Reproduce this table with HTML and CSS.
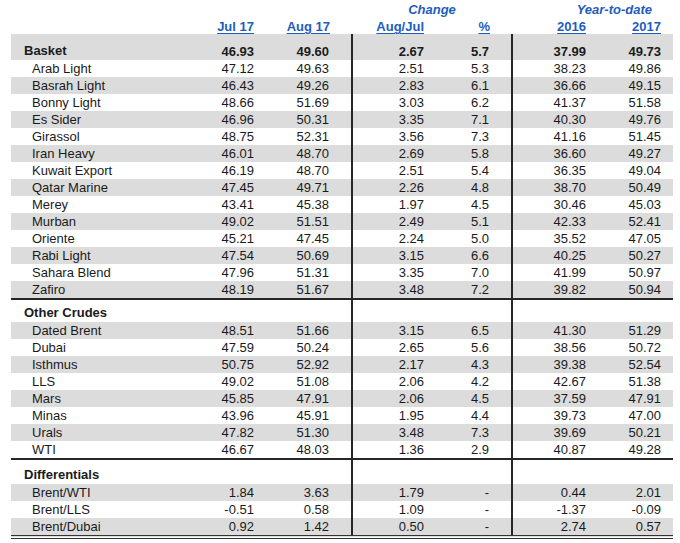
FILE: index.html
```html
<!DOCTYPE html>
<html>
<head>
<meta charset="utf-8">
<link rel="stylesheet" href="styles.css">
</head>
<body>
<table class="prices">
  <colgroup>
    <col class="c-name"><col class="c-jul"><col class="c-aug"><col class="c-chg"><col class="c-pct"><col class="c-y16"><col class="c-y17">
  </colgroup>
  <thead>
    <tr class="h1">
      <th></th><th></th><th></th>
      <th colspan="2" class="grp grp-chg">Change</th>
      <th colspan="2" class="grp grp-ytd">Year-to-date</th>
    </tr>
    <tr class="h2">
      <th></th>
      <th class="num"><span>Jul 17</span></th>
      <th class="num pad-a"><span>Aug 17</span></th>
      <th class="num"><span>Aug/Jul</span></th>
      <th class="num pad-a"><span>%</span></th>
      <th class="num"><span>2016</span></th>
      <th class="num pad-b"><span>2017</span></th>
    </tr>
  </thead>
  <tbody>
    <tr class="sec basket g bold"><td class="secname">Basket</td><td>46.93</td><td>49.60</td><td>2.67</td><td>5.7</td><td>37.99</td><td>49.73</td></tr>
    <tr><td>Arab Light</td><td>47.12</td><td>49.63</td><td>2.51</td><td>5.3</td><td>38.23</td><td>49.86</td></tr>
    <tr class="g"><td>Basrah Light</td><td>46.43</td><td>49.26</td><td>2.83</td><td>6.1</td><td>36.66</td><td>49.15</td></tr>
    <tr><td>Bonny Light</td><td>48.66</td><td>51.69</td><td>3.03</td><td>6.2</td><td>41.37</td><td>51.58</td></tr>
    <tr class="g"><td>Es Sider</td><td>46.96</td><td>50.31</td><td>3.35</td><td>7.1</td><td>40.30</td><td>49.76</td></tr>
    <tr><td>Girassol</td><td>48.75</td><td>52.31</td><td>3.56</td><td>7.3</td><td>41.16</td><td>51.45</td></tr>
    <tr class="g"><td>Iran Heavy</td><td>46.01</td><td>48.70</td><td>2.69</td><td>5.8</td><td>36.60</td><td>49.27</td></tr>
    <tr><td>Kuwait Export</td><td>46.19</td><td>48.70</td><td>2.51</td><td>5.4</td><td>36.35</td><td>49.04</td></tr>
    <tr class="g"><td>Qatar Marine</td><td>47.45</td><td>49.71</td><td>2.26</td><td>4.8</td><td>38.70</td><td>50.49</td></tr>
    <tr><td>Merey</td><td>43.41</td><td>45.38</td><td>1.97</td><td>4.5</td><td>30.46</td><td>45.03</td></tr>
    <tr class="g"><td>Murban</td><td>49.02</td><td>51.51</td><td>2.49</td><td>5.1</td><td>42.33</td><td>52.41</td></tr>
    <tr><td>Oriente</td><td>45.21</td><td>47.45</td><td>2.24</td><td>5.0</td><td>35.52</td><td>47.05</td></tr>
    <tr class="g"><td>Rabi Light</td><td>47.54</td><td>50.69</td><td>3.15</td><td>6.6</td><td>40.25</td><td>50.27</td></tr>
    <tr><td>Sahara Blend</td><td>47.96</td><td>51.31</td><td>3.35</td><td>7.0</td><td>41.99</td><td>50.97</td></tr>
    <tr class="g end"><td>Zafiro</td><td>48.19</td><td>51.67</td><td>3.48</td><td>7.2</td><td>39.82</td><td>50.94</td></tr>

    <tr class="sec other bold"><td class="secname">Other Crudes</td><td></td><td></td><td></td><td></td><td></td><td></td></tr>
    <tr class="g"><td>Dated Brent</td><td>48.51</td><td>51.66</td><td>3.15</td><td>6.5</td><td>41.30</td><td>51.29</td></tr>
    <tr><td>Dubai</td><td>47.59</td><td>50.24</td><td>2.65</td><td>5.6</td><td>38.56</td><td>50.72</td></tr>
    <tr class="g"><td>Isthmus</td><td>50.75</td><td>52.92</td><td>2.17</td><td>4.3</td><td>39.38</td><td>52.54</td></tr>
    <tr><td>LLS</td><td>49.02</td><td>51.08</td><td>2.06</td><td>4.2</td><td>42.67</td><td>51.38</td></tr>
    <tr class="g"><td>Mars</td><td>45.85</td><td>47.91</td><td>2.06</td><td>4.5</td><td>37.59</td><td>47.91</td></tr>
    <tr><td>Minas</td><td>43.96</td><td>45.91</td><td>1.95</td><td>4.4</td><td>39.73</td><td>47.00</td></tr>
    <tr class="g"><td>Urals</td><td>47.82</td><td>51.30</td><td>3.48</td><td>7.3</td><td>39.69</td><td>50.21</td></tr>
    <tr class="end"><td>WTI</td><td>46.67</td><td>48.03</td><td>1.36</td><td>2.9</td><td>40.87</td><td>49.28</td></tr>

    <tr class="sec diff bold"><td class="secname">Differentials</td><td></td><td></td><td></td><td></td><td></td><td></td></tr>
    <tr class="g"><td>Brent/WTI</td><td>1.84</td><td>3.63</td><td>1.79</td><td>-</td><td>0.44</td><td>2.01</td></tr>
    <tr><td>Brent/LLS</td><td>-0.51</td><td>0.58</td><td>1.09</td><td>-</td><td>-1.37</td><td>-0.09</td></tr>
    <tr class="g last"><td>Brent/Dubai</td><td>0.92</td><td>1.42</td><td>0.50</td><td>-</td><td>2.74</td><td>0.57</td></tr>
  </tbody>
</table>
</body>
</html>
```
FILE: styles.css
```css
html, body {
  margin: 0;
  padding: 0;
  background: #ffffff;
}

body {
  font-family: "Liberation Sans", Arial, sans-serif;
  font-size: 13px;
  color: #1a1a1a;
}

.prices {
  margin-left: 11px;
  width: 662px;
  border-collapse: collapse;
  table-layout: fixed;
}

.c-name { width: 174px; }
.c-jul  { width: 69px; }
.c-aug  { width: 98px; }
.c-chg  { width: 72px; }
.c-pct  { width: 88px; }
.c-y16  { width: 74px; }
.c-y17  { width: 87px; }

.prices th,
.prices td {
  padding: 0;
  line-height: 17px;
  white-space: nowrap;
}

.prices thead th {
  font-weight: bold;
  color: #1f5cbf;
}

.prices .h1 th { height: 19px; vertical-align: middle; }
.prices .h2 th { height: 15px; vertical-align: top; line-height: 15px; }

.prices th.grp { font-style: italic; }
.prices th.grp-chg { text-align: center; }
.prices th.grp-ytd { text-align: right; padding-right: 21px; }

.prices th.num { text-align: right; }
.num span { text-decoration: underline; text-underline-offset: 2px; }

.prices th.pad-a { padding-right: 22px; }
.prices th.pad-b { padding-right: 12px; }

.prices tbody td {
  height: 17px;
  text-align: right;
  vertical-align: middle;
}

.prices tbody td:first-child {
  text-align: left;
  padding-left: 21px;
}

.prices tbody td:nth-child(3),
.prices tbody td:nth-child(5) { padding-right: 22px; }
.prices tbody td:nth-child(7) { padding-right: 12px; }

.prices tbody td:nth-child(4),
.prices tbody td:nth-child(6) { border-left: 2px solid #262626; }

.prices tbody tr.g td { background: #dcdcdc; }

.prices tbody tr.sec td { vertical-align: bottom; }
.prices tbody tr.basket td { height: 25px; }
.prices tbody tr.other td { height: 21px; }
.prices tbody tr.diff td { height: 23px; }

.prices tbody tr.sec td.secname {
  padding-left: 13px;
  padding-bottom: 1px;
}

.prices tbody tr.bold td { font-weight: bold; }

.prices tbody tr.end td { border-bottom: 2px solid #262626; }

.prices tbody tr.last td { border-bottom: 4px double #333333; }
```
